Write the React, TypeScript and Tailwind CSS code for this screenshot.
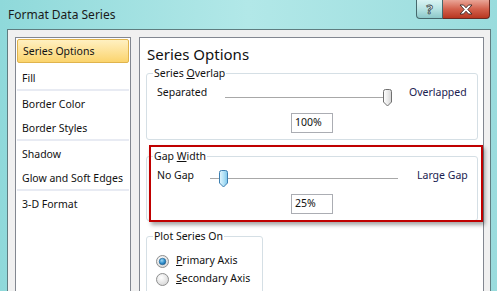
import React from "react";

const font = { fontFamily: '"Noto Sans", "Segoe UI", sans-serif' };

function Thumb({ blue }: { blue?: boolean }) {
  return (
    <svg width="11" height="18" viewBox="0 0 11 18">
      <defs>
        <linearGradient id={blue ? "tb" : "tg"} x1="0" x2="1" y1="0" y2="0">
          {blue ? (
            <>
              <stop offset="0" stopColor="#e3f6fd" />
              <stop offset="0.5" stopColor="#b5e3f7" />
              <stop offset="1" stopColor="#7fc7ea" />
            </>
          ) : (
            <>
              <stop offset="0" stopColor="#ffffff" />
              <stop offset="0.5" stopColor="#ececec" />
              <stop offset="1" stopColor="#d4d4d4" />
            </>
          )}
        </linearGradient>
      </defs>
      <path
        d="M1.5 2.5 Q1.5 0.5 3.5 0.5 H7.5 Q9.5 0.5 9.5 2.5 V13 L5.5 17 L1.5 13 Z"
        fill={`url(#${blue ? "tb" : "tg"})`}
        stroke={blue ? "#3c7fb1" : "#707070"}
        strokeWidth="1"
      />
    </svg>
  );
}

function Radio({ checked }: { checked?: boolean }) {
  return (
    <svg width="13" height="13" viewBox="0 0 13 13">
      <defs>
        <radialGradient id="rg" cx="0.4" cy="0.35" r="0.7">
          <stop offset="0" stopColor="#ffffff" />
          <stop offset="1" stopColor="#d6d6d6" />
        </radialGradient>
        <radialGradient id="rb" cx="0.4" cy="0.35" r="0.7">
          <stop offset="0" stopColor="#9fd8f5" />
          <stop offset="0.6" stopColor="#2f8fcc" />
          <stop offset="1" stopColor="#1b5d93" />
        </radialGradient>
      </defs>
      <circle cx="6.5" cy="6.5" r="6" fill="url(#rg)" stroke="#8e8f8f" strokeWidth="1" />
      {checked && <circle cx="6.5" cy="6.5" r="3.3" fill="url(#rb)" stroke="#1f5f8f" strokeWidth="0.6" />}
    </svg>
  );
}

function Legend({ children }: { children: React.ReactNode }) {
  return (
    <span className="absolute left-[6px] top-[-8px] bg-white px-[1px] text-[10.5px] leading-[14px] text-[#111]">
      {children}
    </span>
  );
}

export default function App() {
  const items: { label: string; sepAfter?: boolean }[] = [
    { label: "Fill", sepAfter: true },
    { label: "Border Color" },
    { label: "Border Styles", sepAfter: true },
    { label: "Shadow" },
    { label: "Glow and Soft Edges", sepAfter: true },
    { label: "3-D Format" },
  ];
  return (
    <div
      className="w-[497px] h-[291px] overflow-hidden flex flex-col bg-gradient-to-r from-[#8fd9da] via-[#b2e8e8] to-[#99dcdd]"
      style={font}
    >
      {/* Title bar */}
      <div className="h-[29px] flex items-start shrink-0">
        <div className="self-center pl-[8px] text-[12px] text-[#1a1a1a] leading-[16px]">Format Data Series</div>
        <div className="ml-auto mr-[7px] flex">
          <div className="w-[27px] h-[19px] border border-t-0 border-[#46686c] rounded-bl-[4px] bg-gradient-to-b from-[#d9f3f3] via-[#b7e3e3] to-[#8cc8c9] flex items-center justify-center">
            <span
              className="text-[13px] font-bold leading-none text-white"
              style={{ WebkitTextStroke: "0.8px #3a4b4e" }}
            >
              ?
            </span>
          </div>
          <div className="w-[47px] h-[19px] border border-t-0 border-l-0 border-[#6b2a22] rounded-br-[4px] bg-gradient-to-b from-[#e9a597] via-[#d3614d] to-[#b8361f] flex items-center justify-center">
            <svg width="16" height="11" viewBox="0 0 16 11">
              <path
                d="M2 1 H5.5 L8 3.8 L10.5 1 H14 L9.8 5.5 L14 10 H10.5 L8 7.2 L5.5 10 H2 L6.2 5.5 Z"
                fill="#ffffff"
                stroke="#3b2a28"
                strokeWidth="0.9"
                strokeLinejoin="round"
              />
            </svg>
          </div>
        </div>
      </div>

      {/* Body */}
      <div className="flex flex-1 min-h-0 pl-[7px]">
        <div className="w-[484px] h-[300px] bg-[#f0f0f0] border border-b-0 border-[#5f7d80] flex pl-[7px] pt-[7px] pr-[6px]">
          {/* Left list */}
          <div className="w-[116px] h-[280px] bg-white border border-[#828790] pt-[1px] flex flex-col text-[10.5px] text-[#111]">
            <div className="mx-[1px] h-[24px] rounded-[2px] border border-[#e0b44d] bg-gradient-to-b from-[#fff0c0] to-[#fbd46c] flex items-center pl-[5px] pt-[1px]">
              Series Options
            </div>
            <div className="h-[2px]" />
            {items.map((it) => (
              <React.Fragment key={it.label}>
                <div className="h-[24px] flex items-center pl-[6px] pt-[3px]">{it.label}</div>
                {it.sepAfter && <div className="h-[2px] mx-[1px] bg-[#e8ebf3]" />}
              </React.Fragment>
            ))}
          </div>

          {/* Right panel */}
          <div className="ml-[8px] flex-1 h-[280px] bg-white border border-[#828790] relative flex flex-col pl-[6px] pr-[5px] text-[10.5px] text-[#111]">
            <div className="mt-[6px] ml-[1px] text-[15px] leading-[20px] text-[#111]">Series Options</div>

            {/* Series Overlap */}
            <div className="mt-[9px] relative border border-[#d5dfe5] rounded-[3px] pl-[10px] pt-[9px] pb-[6px]">
              <Legend>
                Series <span className="underline">O</span>verlap
              </Legend>
              <div className="flex items-center h-[20px]">
                <div className="w-[68px]">Separated</div>
                <div className="relative w-[167px] h-[20px]">
                  <div className="absolute left-0 right-0 top-[14px] h-[1px] bg-[#a8a8a8]" />
                  <div className="absolute left-[157px] top-[6px]">
                    <Thumb />
                  </div>
                </div>
                <div className="ml-[17px] text-[#1a2150]">Overlapped</div>
              </div>
              <div className="mt-[10px] flex justify-center pr-[10px]">
                <div className="w-[42px] h-[20px] border border-[#abadb3] bg-white flex items-center pl-[3px]">100%</div>
              </div>
            </div>

            {/* Gap Width */}
            <div className="mt-[16px] relative border border-[#d5dfe5] rounded-[3px] pl-[10px] pt-[9px] pb-[6px]">
              <Legend>
                Gap <span className="underline">W</span>idth
              </Legend>
              <div className="flex items-center h-[20px]">
                <div className="w-[53px]">No Gap</div>
                <div className="relative w-[188px] h-[20px]">
                  <div className="absolute left-0 right-0 top-[12px] h-[1px] bg-[#a8a8a8]" />
                  <div className="absolute left-[8px] top-[4px]">
                    <Thumb blue />
                  </div>
                </div>
                <div className="ml-[19px] text-[#1a2150]">Large Gap</div>
              </div>
              <div className="mt-[8px] flex justify-center pr-[10px]">
                <div className="w-[42px] h-[20px] border border-[#abadb3] bg-white flex items-center pl-[3px]">25%</div>
              </div>
            </div>

            {/* Plot Series On */}
            <div className="mt-[15px] w-[117px] relative border border-[#d5dfe5] rounded-[3px] pl-[9px] pt-[15px] pb-[6px]">
              <Legend>Plot Series On</Legend>
              <div className="flex items-center h-[18px] gap-[7px]">
                <Radio checked />
                <span>
                  <span className="underline">P</span>rimary Axis
                </span>
              </div>
              <div className="flex items-center h-[18px] gap-[7px]">
                <Radio />
                <span>
                  <span className="underline">S</span>econdary Axis
                </span>
              </div>
            </div>

            {/* Red highlight overlay */}
            <div className="absolute left-[9px] top-[107px] w-[334px] h-[77px] border-2 border-[#c00000] shadow-[2px_3px_4px_rgba(0,0,0,0.35)] pointer-events-none" />
          </div>
        </div>
      </div>
    </div>
  );
}
